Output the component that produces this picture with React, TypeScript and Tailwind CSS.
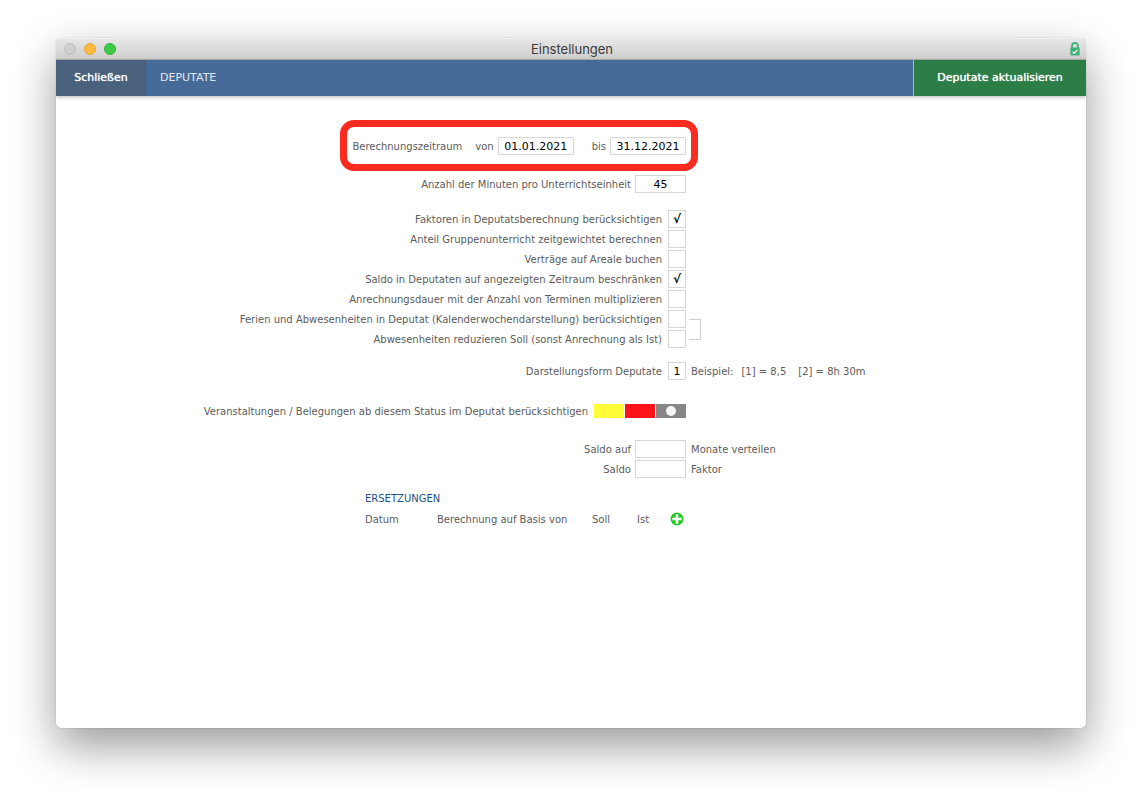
import * as React from 'react'
import clsx from 'clsx'

type CheckFieldProps = {
  label: string
  defaultChecked?: boolean
}

type TextFieldProps = {
  label: string
  defaultValue?: string
  className?: string
}

const boxStyle = 'h-[18px] border border-[#d6d6d6] bg-white text-center text-[11px] text-black'

const TextField: React.FC<TextFieldProps> = ({ label, defaultValue, className }) => (
  <label className="flex h-5 items-center gap-1">
    {label}
    <input type="text" defaultValue={defaultValue} className={clsx(boxStyle, className)} />
  </label>
)

const CheckField: React.FC<CheckFieldProps> = ({ label, defaultChecked = false }) => {
  const [checked, setChecked] = React.useState(defaultChecked)

  return (
    <label className="flex h-5 items-center gap-1.5">
      {label}
      <span className="grid size-[18px] place-items-center">
        <input
          type="checkbox"
          checked={checked}
          onChange={(e) => setChecked(e.target.checked)}
          className="col-start-1 row-start-1 size-[18px] appearance-none border border-[#d6d6d6] bg-white"
        />
        {checked && (
          <span className="pointer-events-none z-10 col-start-1 row-start-1 text-xs leading-none font-bold text-black">
            √
          </span>
        )}
      </span>
    </label>
  )
}

type RowProps = {
  children: React.ReactNode
  after?: React.ReactNode
  className?: string
}

// Fields end on a shared edge, notes follow to the right of it
const Row: React.FC<RowProps> = ({ children, after, className }) => (
  <div className={clsx('grid grid-cols-[63fr_40fr] items-center', className)}>
    <div className="flex flex-col items-end">{children}</div>
    <div>{after}</div>
  </div>
)

const statuses = [
  { id: 'gelb', color: 'bg-[#fffd38]' },
  { id: 'rot', color: 'bg-[#fc1219]' },
  { id: 'grau', color: 'bg-[#878787]' },
]

const StatusPicker: React.FC = () => {
  const [status, setStatus] = React.useState('grau')

  return (
    <div className="flex h-5 items-center gap-1.5" role="radiogroup" aria-labelledby="status-label">
      <span id="status-label">Veranstaltungen / Belegungen ab diesem Status im Deputat berücksichtigen</span>
      <div className="flex gap-px">
        {statuses.map(({ id, color }) => (
          <input
            key={id}
            type="radio"
            name="status"
            aria-label={id}
            checked={status === id}
            onChange={() => setStatus(id)}
            className={clsx(
              'grid h-3.5 w-[30px] appearance-none place-items-center before:size-2.5 before:rounded-full checked:before:bg-[#f6f6f6]',
              color,
            )}
          />
        ))}
      </div>
    </div>
  )
}

const LockIcon: React.FC = () => (
  <svg viewBox="0 0 10 14" className="h-3.5 w-2.5" aria-hidden="true">
    <path d="M2 6.5V3.9a3 3 0 0 1 6 0v2.6" fill="none" stroke="#3faf78" strokeWidth="1.8" />
    <rect x="0.4" y="5.4" width="9.2" height="8" rx="0.5" fill="#3faf78" />
    <path d="M2.7 9.7l1.6 1.6 3.1-3.4" fill="none" stroke="#fff" strokeWidth="1.3" />
  </svg>
)

const PlusIcon: React.FC = () => (
  <svg viewBox="0 0 14 14" className="size-3.5" aria-hidden="true">
    <circle cx="7" cy="7" r="6.5" fill="#1fcb1f" />
    <path d="M7 2.3v9.4M2.3 7h9.4" stroke="#fff" strokeWidth="2.6" />
  </svg>
)

export default function App() {
  return (
    <div className="flex min-h-screen bg-white px-14 pt-[38px] pb-[74px] font-['DejaVu_Sans',Verdana,sans-serif] text-[10px] text-[#5c5c5c]">
      <div className="flex flex-1 flex-col overflow-hidden rounded-[5px] bg-white shadow-[0_0_1px_rgba(0,0,0,0.4),0_18px_45px_rgba(0,0,0,0.4)]">
        <header className="grid h-[22px] grid-cols-[1fr_auto_1fr] items-center border-t border-b border-t-[#f0f0f0] border-b-[#b5b5b5] bg-linear-to-b from-[#e6e6e6] to-[#cfcfcf] pr-1.5 pl-2">
          <div className="flex gap-2">
            <button
              type="button"
              aria-label="Fenster schließen"
              className="size-3 rounded-full border border-[#bdbdbd] bg-[#cfcfcf]"
            />
            <button
              type="button"
              aria-label="Minimieren"
              className="size-3 rounded-full border border-[#e8a935] bg-[#fdbc40]"
            />
            <button
              type="button"
              aria-label="Vergrößern"
              className="size-3 rounded-full border border-[#2fb13a] bg-[#3ec946]"
            />
          </div>
          <h1 className="font-['Inter',sans-serif] text-[13px] leading-5 text-[#3a3a3a]">Einstellungen</h1>
          <div className="flex justify-end">
            <LockIcon />
          </div>
        </header>

        <nav className="z-10 flex h-9 items-stretch bg-[#466b98] text-[11px] text-white shadow-[0_1px_4px_rgba(0,0,0,0.3)]">
          <button type="button" className="w-[90px] bg-[#4a617e] pt-px text-shadow-[0_0_1px_#fff]">
            Schließen
          </button>
          <h2 className="flex flex-1 items-center px-3.5 pt-px text-[#e3e8ef]">DEPUTATE</h2>
          <button
            type="button"
            className="w-[173px] border-l border-[#a9bfae] bg-[#2d7d46] pt-px text-shadow-[0_0_1px_#fff]"
          >
            Deputate aktualisieren
          </button>
        </nav>

        <form className="pt-6 pb-10">
          <Row>
            <div className="-mr-3 flex items-center rounded-[14px] border-[7px] border-[#fb2c1f] pt-2.5 pr-[5px] pb-[9px] pl-[5px]">
              <span className="mr-[13px]">Berechnungszeitraum</span>
              <label className="mr-[18px] flex items-center gap-1">
                von
                <input type="text" defaultValue="01.01.2021" className={clsx(boxStyle, 'w-[76px]')} />
              </label>
              <label className="flex items-center gap-1">
                bis
                <input type="text" defaultValue="31.12.2021" className={clsx(boxStyle, 'w-[76px]')} />
              </label>
            </div>
          </Row>

          <Row className="mt-[3px]">
            <TextField label="Anzahl der Minuten pro Unterrichtseinheit" defaultValue="45" className="w-[51px]" />
          </Row>

          <Row className="mt-[15px]">
            <CheckField label="Faktoren in Deputatsberechnung berücksichtigen" defaultChecked />
            <CheckField label="Anteil Gruppenunterricht zeitgewichtet berechnen" />
            <CheckField label="Verträge auf Areale buchen" />
            <CheckField label="Saldo in Deputaten auf angezeigten Zeitraum beschränken" defaultChecked />
            <CheckField label="Anrechnungsdauer mit der Anzahl von Terminen multiplizieren" />
          </Row>
          <Row after={<div className="ml-[3px] h-[21px] w-3 border border-l-0 border-[#cfcfcf]" />}>
            <CheckField label="Ferien und Abwesenheiten in Deputat (Kalenderwochendarstellung) berücksichtigen" />
            <CheckField label="Abwesenheiten reduzieren Soll (sonst Anrechnung als Ist)" />
          </Row>

          <Row
            className="mt-3"
            after={
              <p className="flex pl-[5px]">
                <span className="mr-2">Beispiel:</span>
                <span className="mr-3">[1] = 8,5</span>
                <span>[2] = 8h 30m</span>
              </p>
            }
          >
            <label className="flex h-5 items-center gap-1.5">
              Darstellungsform Deputate
              <input type="text" defaultValue="1" className={clsx(boxStyle, 'w-[18px]')} />
            </label>
          </Row>

          <Row className="mt-5">
            <StatusPicker />
          </Row>

          <Row className="mt-[18px]" after={<p className="pl-[5px]">Monate verteilen</p>}>
            <TextField label="Saldo auf" className="w-[51px]" />
          </Row>
          <Row after={<p className="pl-[5px]">Faktor</p>}>
            <TextField label="Saldo" className="w-[51px]" />
          </Row>

          <Row className="mt-2.5">
            <table className="w-[321px] table-fixed text-left">
              <caption className="h-5 text-left leading-5 text-[#1d4f8c]">ERSETZUNGEN</caption>
              <thead>
                <tr className="h-5">
                  <th className="w-[72px] font-normal">Datum</th>
                  <th className="w-[155px] font-normal">Berechnung auf Basis von</th>
                  <th className="w-[45px] font-normal">Soll</th>
                  <th className="w-[33px] font-normal">Ist</th>
                  <th>
                    <button type="button" aria-label="Ersetzung hinzufügen" className="block">
                      <PlusIcon />
                    </button>
                  </th>
                </tr>
              </thead>
            </table>
          </Row>
        </form>
      </div>
    </div>
  )
}
